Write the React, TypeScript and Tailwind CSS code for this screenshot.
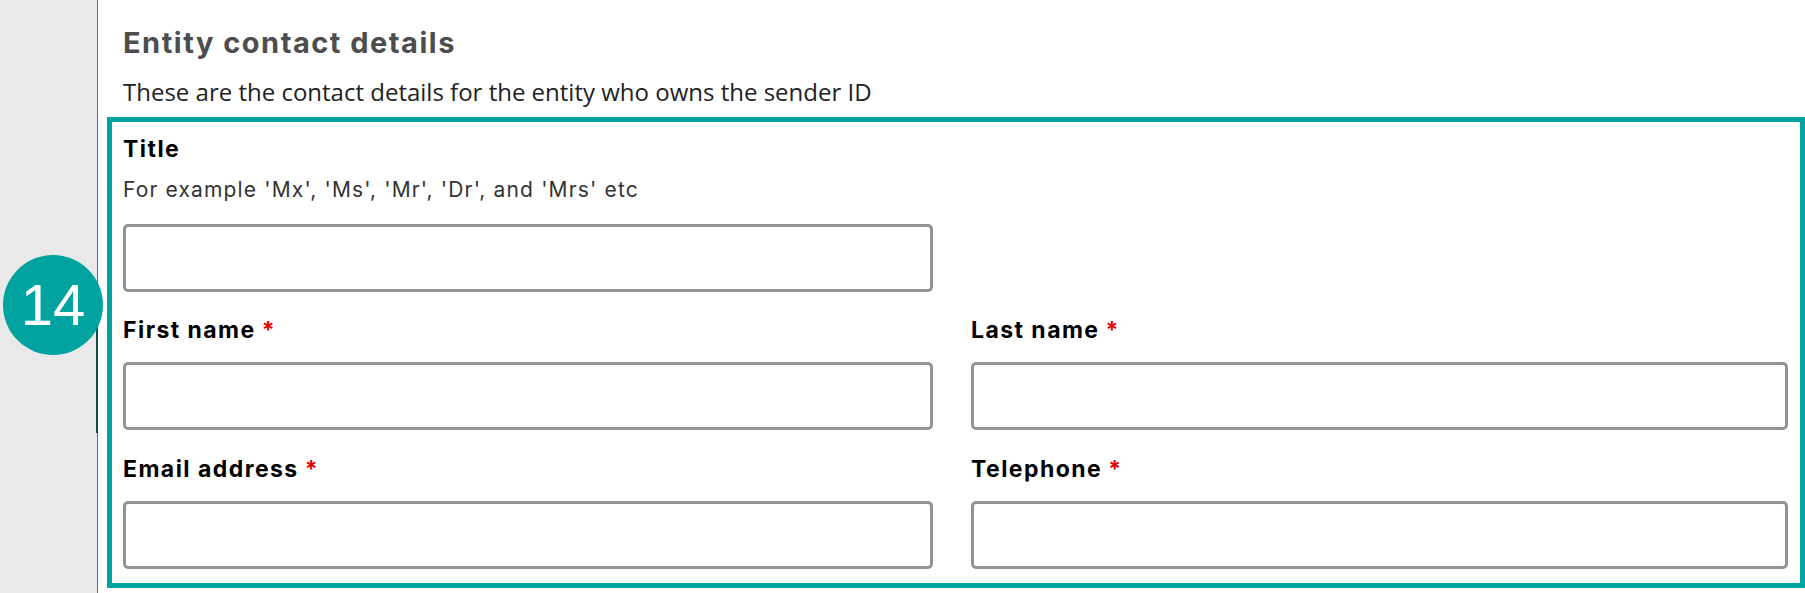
import React from 'react';

const heading = "font-['Inter','Liberation_Sans',sans-serif]";
const body = "font-['Open_Sans','Liberation_Sans',sans-serif]";

const Field = ({ label, required }: { label: string; required?: boolean }) => (
  <div>
    <label className={`${heading} block text-[23px] font-bold leading-[28px] tracking-[1.45px] text-black`}>
      {label}
      {required && <span className="ml-[6px] text-[#e00000]">*</span>}
    </label>
    <input
      type="text"
      className="mt-[18px] block h-[68px] w-full rounded-[5px] border-[3px] border-[#939393] bg-white px-3 outline-none"
    />
  </div>
);

export default function App() {
  return (
    <div className="relative flex h-[593px] w-[1805px] overflow-hidden bg-white">
      {/* left rail */}
      <div className="relative w-[98px] shrink-0 border-r border-[#6b6b6b] bg-[#e9e9e9]">
        <div className="absolute right-[-1px] top-[320px] h-[113px] w-[2px] bg-[#0b4d49]" />
      </div>

      <div className="flex-1 pt-[25px]">
        <h2 className={`${heading} pl-[25px] text-[29px] font-bold leading-[36px] tracking-[1.5px] text-[#4d4d4d]`}>
          Entity contact details
        </h2>
        <p className={`${body} mt-[16px] pl-[25px] text-[24px] leading-[30px] text-[#222]`}>
          These are the contact details for the entity who owns the sender ID
        </p>

        <div className="ml-[9px] mt-[10px] border-[5px] border-[#00a3a0] pb-[14px] pl-[11px] pr-[12px] pt-[13px]">
          <div className="grid grid-cols-[810px_1fr] gap-x-[38px]">
            <div>
              <label className={`${heading} block text-[23px] font-bold leading-[28px] tracking-[1.45px] text-black`}>
                Title
              </label>
              <p className={`${heading} mt-[13px] text-[21px] leading-[28px] tracking-[1.15px] text-[#333]`}>
                For example 'Mx', 'Ms', 'Mr', 'Dr', and 'Mrs' etc
              </p>
              <input
                type="text"
                className="mt-[20px] block h-[68px] w-full rounded-[5px] border-[3px] border-[#939393] bg-white px-3 outline-none"
              />
            </div>
            <div />
          </div>

          <div className="mt-[24px] grid grid-cols-[810px_1fr] gap-x-[38px] gap-y-[25px]">
            <Field label="First name" required />
            <Field label="Last name" required />
            <Field label="Email address" required />
            <Field label="Telephone" required />
          </div>
        </div>
      </div>

      {/* step badge */}
      <div className="absolute left-[3px] top-[255px] flex h-[100px] w-[100px] items-center justify-center rounded-full bg-[#00a3a0]">
        <span className="font-['Liberation_Sans',Arial,sans-serif] text-[58px] leading-none text-white">14</span>
      </div>
    </div>
  );
}
